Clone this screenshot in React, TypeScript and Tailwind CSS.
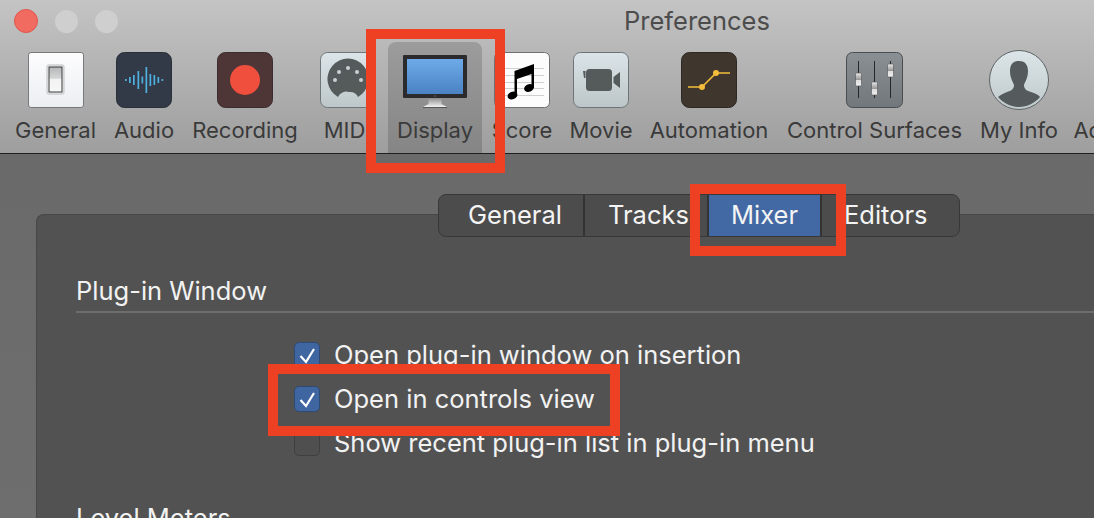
import React from "react";

const GeneralIcon = () => (
  <svg width="56" height="56" viewBox="0 0 56 56">
    <defs>
      <linearGradient id="g1" x1="0" y1="0" x2="0" y2="1"><stop offset="0" stopColor="#fdfdfe" /><stop offset="1" stopColor="#eceef1" /></linearGradient>
      <linearGradient id="g2" x1="0" y1="0" x2="0" y2="1"><stop offset="0" stopColor="#b4b8b8" /><stop offset="0.45" stopColor="#d4d6d6" /><stop offset="0.5" stopColor="#f2f2f2" /><stop offset="1" stopColor="#f7f7f7" /></linearGradient>
    </defs>
    <rect x="0.5" y="0.5" width="55" height="55" rx="2.5" fill="url(#g1)" stroke="#77797c" />
    <rect x="19" y="13" width="17" height="29" rx="1.5" fill="#eceded" stroke="#bdbfc1" />
    <rect x="21" y="15" width="13" height="25" fill="url(#g2)" stroke="#3a3a3a" />
  </svg>
);

const AudioIcon = () => (
  <svg width="56" height="56" viewBox="0 0 56 56">
    <rect x="0.5" y="0.5" width="55" height="55" rx="8" fill="#323a47" stroke="#2a2f38" />
    {[[9, 1], [13, 3], [17, 5], [21.5, 9], [25.5, 3.5], [29.5, 13], [33.5, 6], [37.5, 5], [41.5, 3], [45.5, 1]].map(([x, h], i) => (
      <rect key={i} x={x} y={28 - h} width="1.7" height={h * 2} fill="#4fb0e2" />
    ))}
  </svg>
);

const RecordIcon = () => (
  <svg width="56" height="56" viewBox="0 0 56 56">
    <rect x="0.5" y="0.5" width="55" height="55" rx="8" fill="#4e3637" stroke="#3c2c2d" />
    <circle cx="28" cy="28" r="15" fill="#ef4f3c" />
  </svg>
);

const MidiIcon = () => (
  <svg width="56" height="56" viewBox="0 0 56 56">
    <defs><linearGradient id="g3" x1="0" y1="0" x2="0" y2="1"><stop offset="0" stopColor="#dce6ea" /><stop offset="1" stopColor="#bdc6c8" /></linearGradient></defs>
    <rect x="0.5" y="0.5" width="55" height="55" rx="7" fill="url(#g3)" stroke="#6f7678" />
    <path d="M18 45 A 20.5 20.5 0 1 1 38 45 A 9 9 0 0 0 29 40 A 9 9 0 0 0 18 45 Z" fill="#555b5b" />
    {[[15, 28], [19, 20], [28, 16], [37, 20], [41, 28]].map(([x, y], i) => (
      <circle key={i} cx={x} cy={y} r="2" fill="#c9d0d1" />
    ))}
  </svg>
);

const DisplayIcon = () => (
  <svg width="64" height="56" viewBox="0 -3 64 56">
    <defs>
      <linearGradient id="g4" x1="0" y1="0" x2="0" y2="1"><stop offset="0" stopColor="#6eaae8" /><stop offset="1" stopColor="#4a82c4" /></linearGradient>
      <linearGradient id="g5" x1="0" y1="0" x2="0" y2="1"><stop offset="0" stopColor="#8c8c8c" /><stop offset="1" stopColor="#f2f2f2" /></linearGradient>
    </defs>
    <rect x="0" y="0" width="64" height="43" rx="1" fill="#2b2b2d" />
    <rect x="4" y="4" width="56" height="35" fill="url(#g4)" />
    <circle cx="32" cy="41" r="0.7" fill="#777" />
    <path d="M25.5 43 H38.5 V49 L44 52 H20 L25.5 49 Z" fill="url(#g5)" />
    <rect x="20" y="52" width="24" height="1" fill="#555" />
  </svg>
);

const ScoreIcon = () => (
  <svg width="56" height="56" viewBox="0 0 56 56">
    <rect x="0.5" y="0.5" width="55" height="55" rx="5" fill="#fcfcfc" stroke="#707070" />
    {[16, 23, 30, 36, 43].map((y) => (
      <rect key={y} x="1" y={y} width="49" height="1" fill="#cfcfcf" />
    ))}
    <path d="M20.5 19 L40 12 V36 H37.5 V22 L23 27 V44 H20.5 Z" fill="#000" />
    <ellipse cx="18.5" cy="43.5" rx="5" ry="3.8" transform="rotate(-20 18.5 43.5)" fill="#000" />
    <ellipse cx="35" cy="36" rx="5" ry="3.8" transform="rotate(-20 35 36)" fill="#000" />
  </svg>
);

const MovieIcon = () => (
  <svg width="56" height="56" viewBox="0 0 56 56">
    <defs><linearGradient id="g6" x1="0" y1="0" x2="0" y2="1"><stop offset="0" stopColor="#dbe5e9" /><stop offset="1" stopColor="#bcc6c8" /></linearGradient></defs>
    <rect x="0.5" y="0.5" width="55" height="55" rx="7" fill="url(#g6)" stroke="#6d7477" />
    <rect x="13" y="17" width="26" height="22" rx="3.5" fill="#555b5b" />
    <path d="M10 19 L12.5 19 V26 L11 26 Z" fill="#555b5b" />
    <path d="M40.5 25 L47 20 V36 L40.5 31 Z" fill="#555b5b" />
  </svg>
);

const AutomationIcon = () => (
  <svg width="56" height="56" viewBox="0 0 56 56">
    <rect x="0.5" y="0.5" width="55" height="55" rx="8" fill="#3f362d" stroke="#2d2822" />
    <path d="M7 35 H21 L35 21 H49" stroke="#f4be3b" strokeWidth="1.6" fill="none" />
    <circle cx="21" cy="35" r="3" fill="#f4be3b" />
    <circle cx="35" cy="21" r="3" fill="#f4be3b" />
  </svg>
);

const Fader = ({ x, y }: { x: number; y: number }) => (
  <g>
    <rect x={x - 0.4} y="9" width="0.9" height="37" fill="#1d1d1d" />
    <rect x={x - 3} y={y} width="6" height="13" rx="1" fill="url(#g8)" stroke="#555" strokeWidth="0.6" />
  </g>
);

const ControlIcon = () => (
  <svg width="57" height="56" viewBox="0 0 57 56">
    <defs>
      <linearGradient id="g7" x1="0" y1="0" x2="0" y2="1"><stop offset="0" stopColor="#8b9095" /><stop offset="1" stopColor="#72777c" /></linearGradient>
      <linearGradient id="g8" x1="0" y1="0" x2="0" y2="1"><stop offset="0" stopColor="#e8e8e8" /><stop offset="0.5" stopColor="#999" /><stop offset="0.55" stopColor="#ddd" /><stop offset="1" stopColor="#eee" /></linearGradient>
    </defs>
    <rect x="0.5" y="0.5" width="56" height="55" rx="6" fill="url(#g7)" stroke="#4a4d50" />
    <Fader x={12.5} y={21} />
    <Fader x={28.5} y={30} />
    <Fader x={44.5} y={12} />
  </svg>
);

const InfoIcon = () => (
  <svg width="60" height="60" viewBox="0 0 60 60">
    <defs>
      <linearGradient id="g9" x1="0" y1="0" x2="0" y2="1"><stop offset="0" stopColor="#dce6ea" /><stop offset="1" stopColor="#bfc9cb" /></linearGradient>
      <clipPath id="c1"><circle cx="30" cy="30" r="28.5" /></clipPath>
    </defs>
    <circle cx="30" cy="30" r="29.5" fill="url(#g9)" stroke="#5e6466" />
    <path clipPath="url(#c1)" d="M30 11 C37 11 39 16 39 21 C39 28 36 32 35 35 C35 39 38 41 42 42 C47 44 50 45 51 47 C46 53 38 57 30 57 C22 57 14 53 9 47 C11 45 14 44 18 42 C22 41 25 39 25 35 C24 32 21 28 21 21 C21 16 23 11 30 11 Z" fill="#555b5c" />
  </svg>
);

const Check = () => (
  <svg width="24" height="24" viewBox="1 1 24 24" className="block">
    <path d="M6.5 14 L12 20 L20 7" stroke="#fff" strokeWidth="2.2" fill="none" />
  </svg>
);

const ToolItem = ({ label, w, children }: { label: string; w: string; children: React.ReactNode }) => (
  <div className={`${w} flex shrink-0 flex-col items-center pt-[8px]`}>
    <div className="flex h-[60px] items-center">{children}</div>
    <div className="mt-[5px] whitespace-nowrap text-[22px] leading-[30px] text-[#3a3a3a]">{label}</div>
  </div>
);

const Row = ({ checked, label }: { checked: boolean; label: string }) => (
  <div className="flex h-[44px] items-center">
    <div className={checked ? "h-[26px] w-[26px] rounded-[5px] border border-[#2f4a75] bg-[#3f66a0]" : "h-[26px] w-[26px] rounded-[5px] border border-[#3f3f3f] bg-[#4f4f4f]"}>
      {checked ? <Check /> : null}
    </div>
    <span className="ml-[14px] whitespace-nowrap text-[25.5px] leading-[30px] text-[#f2f2f2]">{label}</span>
  </div>
);

export default function App() {
  return (
    <div className="relative flex h-[518px] w-[1094px] flex-col overflow-hidden bg-[#6b6b6b] font-['Inter',sans-serif]">
      <header className="h-[154px] shrink-0 border-b border-[#1f1f1f] bg-gradient-to-b from-[#c4c4c4] to-[#9e9e9e]">
        <div className="flex h-[42px] items-center pl-[14px]">
          <div className="h-[24px] w-[24px] rounded-full border border-[#e0554c] bg-[#f26b60]" />
          <div className="ml-[17px] h-[23px] w-[23px] rounded-full bg-[#cfcfcf]" />
          <div className="ml-[17px] h-[23px] w-[23px] rounded-full bg-[#cfcfcf]" />
          <div className="ml-[506px] whitespace-nowrap text-[25.5px] leading-[30px] text-[#4c4c4c]">Preferences</div>
        </div>
        <div className="flex h-[111px] gap-[19px] pl-[15px]">
          <ToolItem label="General" w="w-[81px]"><GeneralIcon /></ToolItem>
          <ToolItem label="Audio" w="w-[58px]"><AudioIcon /></ToolItem>
          <ToolItem label="Recording" w="w-[106px]"><RecordIcon /></ToolItem>
          <ToolItem label="MIDI" w="w-[61px]"><MidiIcon /></ToolItem>
          <div className="relative z-10 -mx-[9px] h-[111px] rounded-t-[8px] bg-gradient-to-b from-[#9c9c9c] to-[#858585] px-[9px]">
            <ToolItem label="Display" w="w-[76px]"><DisplayIcon /></ToolItem>
          </div>
          <ToolItem label="Score" w="w-[60px]"><ScoreIcon /></ToolItem>
          <ToolItem label="Movie" w="w-[60px]"><MovieIcon /></ToolItem>
          <ToolItem label="Automation" w="w-[118px]"><AutomationIcon /></ToolItem>
          <ToolItem label="Control Surfaces" w="w-[175px]"><ControlIcon /></ToolItem>
          <ToolItem label="My Info" w="w-[76px]"><InfoIcon /></ToolItem>
          <ToolItem label="Advanced" w="w-[100px]"><span /></ToolItem>
        </div>
      </header>

      <main className="flex min-h-0 flex-1 flex-col bg-gradient-to-b from-[#6a6a6a] to-[#6e6e6e] pl-[36px] pt-[40px]">
        <div className="relative z-10 ml-[402px] flex h-[43px] w-[522px] shrink-0 overflow-hidden rounded-[8px] border border-[#383838] bg-[#4c4c4c] text-[25.5px] leading-[39px] text-[#f4f4f4]">
          <div className="w-[146px] border-r-2 border-[#333] pl-[29px]">General</div>
          <div className="w-[124px] border-r-2 border-[#333] pl-[23px]">Tracks</div>
          <div className="w-[113px] border-r-2 border-[#333] bg-[#4269a3] text-center">Mixer</div>
          <div className="flex-1 pl-[22px]">Editors</div>
        </div>
        <section className="-mt-[23px] flex-1 rounded-tl-[8px] border-l border-t border-[#474747] bg-[#525252] pl-[39px] pt-[59px]">
          <h2 className="border-b-2 border-[#6d6d6d] pb-[3px] text-[25.5px] font-normal leading-[34px] text-[#f2f2f2]">Plug-in Window</h2>
          <div className="ml-[218px] mt-[20px]">
            <Row checked label="Open plug-in window on insertion" />
            <Row checked label="Open in controls view" />
            <Row checked={false} label="Show recent plug-in list in plug-in menu" />
          </div>
          <h2 className="mt-[36px] text-[25.5px] font-normal leading-[34px] text-[#f2f2f2]">Level Meters</h2>
        </section>
      </main>

      <div className="absolute left-[366px] top-[29px] z-20 h-[144px] w-[139px] border-[10px] border-[#ee4023]" />
      <div className="absolute left-[690px] top-[184px] z-20 h-[72px] w-[156px] border-[10px] border-[#ee4023]" />
      <div className="absolute left-[268px] top-[364px] z-20 h-[72px] w-[352px] border-[10px] border-[#ee4023]" />
    </div>
  );
}
